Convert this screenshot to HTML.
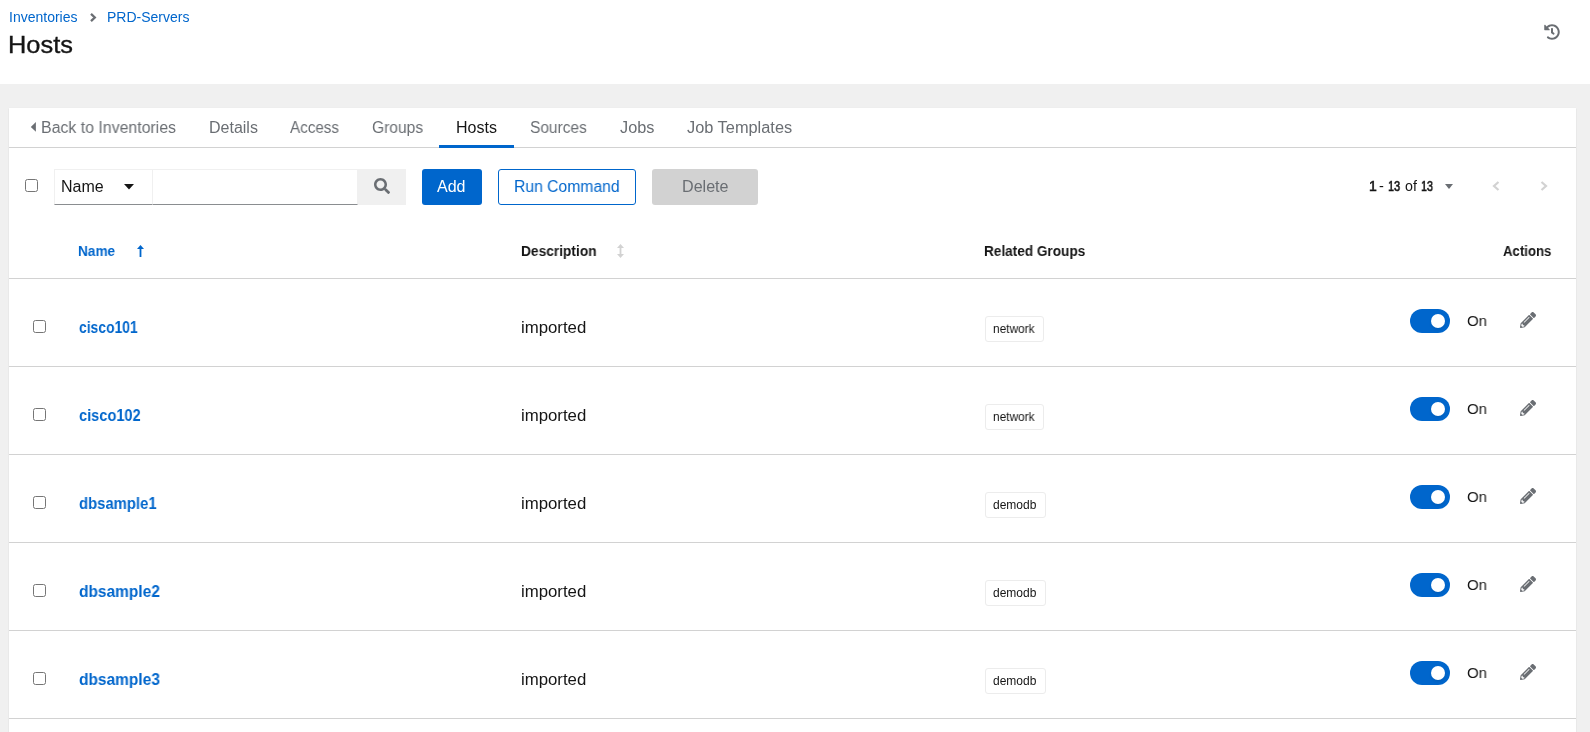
<!DOCTYPE html>
<html><head><meta charset="utf-8"><title>Hosts</title>
<style>
html,body{margin:0;padding:0;}
body{width:1590px;height:732px;overflow:hidden;position:relative;background:#f0f0f0;font-family:"Liberation Sans", sans-serif;}
.hdr{position:absolute;left:0;top:0;width:1590px;height:84px;background:#fff;}
.card{position:absolute;left:9px;top:108px;width:1567px;height:700px;background:#fff;box-shadow:0 1px 1px 0 rgba(3,3,3,.12),0 0 1px 0 rgba(3,3,3,.06);}
.t{position:absolute;white-space:nowrap;will-change:transform;}
.i{position:absolute;display:block;}
.hl{position:absolute;height:1px;background:#d2d2d2;}
.cb{position:absolute;width:13px;height:13px;box-sizing:border-box;border:1px solid #767676;border-radius:2.5px;background:#fff;}
.btn{position:absolute;top:169px;height:36px;border-radius:3px;}
.lbl{position:absolute;height:26px;box-sizing:border-box;border:1px solid #ececec;border-radius:3px;background:#fff;}
.tg{position:absolute;left:1410px;width:40px;height:24px;border-radius:12px;background:#0066cc;}
.kn{position:absolute;left:21px;top:5px;width:14px;height:14px;border-radius:7px;background:#fff;box-shadow:0 2px 3px rgba(3,3,3,.08);}
</style></head><body>
<div class="hdr"></div>
<div class="t" style="left:9px;top:10.15px;font-size:14px;line-height:14px;color:#0066cc;font-weight:400;">Inventories</div>
<svg class="i" style="left:89px;top:12px" width="9" height="11" viewBox="0 0 9 11"><path d="M2 1.9 L5.8 5.5 L2 9.1" fill="none" stroke="#6a6e73" stroke-width="2.3"/></svg>
<div class="t" style="left:107px;top:10.15px;font-size:14px;line-height:14px;color:#0066cc;font-weight:400;">PRD-Servers</div>
<div class="t" style="left:8px;top:33.48px;font-size:24px;line-height:24px;color:#151515;font-weight:400;transform:scaleX(1.0574);transform-origin:0 0;-webkit-text-stroke:0.35px #151515;">Hosts</div>
<svg class="i" style="left:1544px;top:24px" width="16" height="16" viewBox="0 0 512 512"><path fill="#6a6e73" d="M504 255.531c.253 136.64-111.18 248.372-247.82 248.468-59.015.042-113.223-20.53-155.822-54.911-11.077-8.94-11.905-25.541-1.839-35.607l11.267-11.267c8.609-8.609 22.353-9.551 31.891-1.984C173.062 425.135 212.781 440 256 440c101.705 0 184-82.311 184-184 0-101.705-82.311-184-184-184-48.814 0-93.149 18.969-126.068 49.932l50.754 50.754c10.08 10.08 2.941 27.314-11.313 27.314H24c-8.837 0-16-7.163-16-16V38.627c0-14.254 17.234-21.393 27.314-11.314l49.372 49.372C129.209 34.136 189.552 8 256 8c136.81 0 247.747 110.78 248 247.531zm-180.912 78.784l9.823-12.63c8.138-10.463 6.253-25.542-4.21-33.679L288 256.349V152c0-13.255-10.745-24-24-24h-16c-13.255 0-24 10.745-24 24v135.651l65.409 50.874c10.463 8.137 25.541 6.253 33.679-4.21z"/></svg>
<div class="card"></div>
<div class="hl" style="left:9px;top:147px;width:1567px"></div>
<svg class="i" style="left:30px;top:122px" width="7" height="10" viewBox="0 0 7 10"><path d="M5.9 0 L0.8 4.9 L5.9 9.8 Z" fill="#6a6e73"/></svg>
<div class="t" style="left:41px;top:120.46px;font-size:16px;line-height:16px;color:#6a6e73;font-weight:400;transform:scaleX(0.9926);transform-origin:0 0;">Back to Inventories</div>
<div class="t" style="left:209px;top:120.46px;font-size:16px;line-height:16px;color:#6a6e73;font-weight:400;transform:scaleX(0.9918);transform-origin:0 0;">Details</div>
<div class="t" style="left:290px;top:120.46px;font-size:16px;line-height:16px;color:#6a6e73;font-weight:400;transform:scaleX(0.9500);transform-origin:0 0;">Access</div>
<div class="t" style="left:372px;top:120.46px;font-size:16px;line-height:16px;color:#6a6e73;font-weight:400;transform:scaleX(0.9736);transform-origin:0 0;">Groups</div>
<div class="t" style="left:456px;top:120.46px;font-size:16px;line-height:16px;color:#151515;font-weight:400;transform:scaleX(0.9927);transform-origin:0 0;">Hosts</div>
<div class="t" style="left:530px;top:120.46px;font-size:16px;line-height:16px;color:#6a6e73;font-weight:400;transform:scaleX(0.9678);transform-origin:0 0;">Sources</div>
<div class="t" style="left:619.5px;top:120.46px;font-size:16px;line-height:16px;color:#6a6e73;font-weight:400;transform:scaleX(1.0176);transform-origin:0 0;">Jobs</div>
<div class="t" style="left:687px;top:120.46px;font-size:16px;line-height:16px;color:#6a6e73;font-weight:400;transform:scaleX(1.0223);transform-origin:0 0;">Job Templates</div>
<div style="position:absolute;left:439px;top:145px;width:75px;height:3px;background:#0066cc"></div>
<div class="cb" style="left:25px;top:179px"></div>
<div style="position:absolute;left:54px;top:169px;width:99px;height:35px;border:1px solid #f0f0f0;border-bottom-color:#8a8d90;box-sizing:border-box;height:36px"></div>
<div class="t" style="left:61px;top:179.46px;font-size:16px;line-height:16px;color:#151515;font-weight:400;">Name</div>
<svg class="i" style="left:124px;top:184px" width="10" height="6" viewBox="0 0 10 6"><path d="M0 0 H10 L5 5.5 Z" fill="#151515"/></svg>
<div style="position:absolute;left:153px;top:169px;width:205px;height:36px;border:1px solid #f0f0f0;border-left:none;border-bottom-color:#8a8d90;box-sizing:border-box"></div>
<div style="position:absolute;left:358px;top:169px;width:48px;height:36px;background:#f0f0f0"></div>
<svg class="i" style="left:374px;top:178px" width="16" height="16" viewBox="0 0 512 512"><path fill="#6a6e73" d="M505 442.7L405.3 343c-4.5-4.5-10.6-7-17-7H372c27.6-35.3 44-79.7 44-128C416 93.1 322.9 0 208 0S0 93.1 0 208s93.1 208 208 208c48.3 0 92.7-16.4 128-44v16.3c0 6.4 2.5 12.5 7 17l99.7 99.7c9.4 9.4 24.6 9.4 33.9 0l28.3-28.3c9.4-9.4 9.4-24.6.1-34zM208 336c-70.7 0-128-57.2-128-128 0-70.7 57.2-128 128-128 70.7 0 128 57.2 128 128 0 70.7-57.2 128-128 128z"/></svg>
<div class="btn" style="left:422px;width:60px;background:#0066cc"></div>
<div class="t" style="left:437px;top:179.46px;font-size:16px;line-height:16px;color:#ffffff;font-weight:400;">Add</div>
<div class="btn" style="left:498px;width:138px;border:1px solid #0066cc;box-sizing:border-box"></div>
<div class="t" style="left:514px;top:179.46px;font-size:16px;line-height:16px;color:#0066cc;font-weight:400;transform:scaleX(0.9815);transform-origin:0 0;">Run Command</div>
<div class="btn" style="left:652px;width:106px;background:#d2d2d2"></div>
<div class="t" style="left:681.5px;top:179.46px;font-size:16px;line-height:16px;color:#6a6e73;font-weight:400;transform:scaleX(1.0065);transform-origin:0 0;">Delete</div>
<div class="t" style="left:1368.5px;top:179.15px;font-size:14px;line-height:14px;color:#151515;font-weight:400;-webkit-text-stroke:0.55px #151515;">1</div>
<div class="t" style="left:1378.5px;top:179.15px;font-size:14px;line-height:14px;color:#151515;font-weight:400;transform:scaleX(1.0400);transform-origin:0 0;">-</div>
<div class="t" style="left:1387.5px;top:179.15px;font-size:14px;line-height:14px;color:#151515;font-weight:400;transform:scaleX(0.7812);transform-origin:0 0;-webkit-text-stroke:0.55px #151515;">13</div>
<div class="t" style="left:1404.5px;top:179.15px;font-size:14px;line-height:14px;color:#151515;font-weight:400;transform:scaleX(1.0167);transform-origin:0 0;">of</div>
<div class="t" style="left:1420.5px;top:179.15px;font-size:14px;line-height:14px;color:#151515;font-weight:400;transform:scaleX(0.7688);transform-origin:0 0;-webkit-text-stroke:0.55px #151515;">13</div>
<svg class="i" style="left:1445px;top:184px" width="8" height="5" viewBox="0 0 8 5"><path d="M0 0 H8 L4 5 Z" fill="#6a6e73"/></svg>
<svg class="i" style="left:1492px;top:181px" width="8" height="10" viewBox="0 0 8 10"><path d="M6.5 1 L2 5 L6.5 9" fill="none" stroke="#d2d2d2" stroke-width="2.2"/></svg>
<svg class="i" style="left:1540px;top:181px" width="8" height="10" viewBox="0 0 8 10"><path d="M1.5 1 L6 5 L1.5 9" fill="none" stroke="#d2d2d2" stroke-width="2.2"/></svg>
<div class="t" style="left:78px;top:244.15px;font-size:14px;line-height:14px;color:#0066cc;font-weight:700;transform:scaleX(0.9737);transform-origin:0 0;">Name</div>
<svg class="i" style="left:136.5px;top:245px" width="7" height="12" viewBox="0 0 7 12"><path d="M3.5 0 L7 4 H4.4 V12 H2.6 V4 H0 Z" fill="#0066cc"/></svg>
<div class="t" style="left:521px;top:244.15px;font-size:14px;line-height:14px;color:#151515;font-weight:700;transform:scaleX(0.9805);transform-origin:0 0;">Description</div>
<svg class="i" style="left:617px;top:244px" width="7" height="14" viewBox="0 0 7 14"><path d="M3.5 0 L7 4 H4.4 V10 H7 L3.5 14 L0 10 H2.6 V4 H0 Z" fill="#d2d2d2"/></svg>
<div class="t" style="left:984px;top:244.15px;font-size:14px;line-height:14px;color:#151515;font-weight:700;transform:scaleX(0.9712);transform-origin:0 0;">Related Groups</div>
<div class="t" style="left:1503px;top:244.15px;font-size:14px;line-height:14px;color:#151515;font-weight:700;transform:scaleX(0.9423);transform-origin:0 0;">Actions</div>
<div class="hl" style="left:9px;top:278px;width:1567px"></div>
<div class="cb" style="left:33px;top:320px"></div>
<div class="t" style="left:78.5px;top:319.86px;font-size:16px;line-height:16px;color:#0066cc;font-weight:700;transform:scaleX(0.8676);transform-origin:0 0;">cisco101</div>
<div class="t" style="left:521px;top:320.46px;font-size:16px;line-height:16px;color:#151515;font-weight:400;transform:scaleX(1.0484);transform-origin:0 0;">imported</div>
<div class="lbl" style="left:985px;top:316px;width:59px"></div>
<div class="t" style="left:993px;top:322.84px;font-size:12px;line-height:12px;color:#151515;font-weight:400;transform:scaleX(0.9884);transform-origin:0 0;">network</div>
<div class="tg" style="top:309px"><div class="kn"></div></div>
<div class="t" style="left:1467px;top:312.88px;font-size:15.5px;line-height:15.5px;color:#151515;font-weight:400;transform:scaleX(0.9667);transform-origin:0 0;">On</div>
<svg class="i" style="left:1520px;top:312px" width="16" height="16" viewBox="0 0 512 512"><path fill="#6a6e73" d="M497.9 142.1l-46.1 46.1c-4.7 4.7-12.3 4.7-17 0l-111-111c-4.7-4.7-4.7-12.3 0-17l46.1-46.1c18.7-18.7 49.1-18.7 67.9 0l60.1 60.1c18.8 18.7 18.8 49.1 0 67.9zM284.2 99.8L21.6 362.4.4 483.9c-2.9 16.4 11.4 30.6 27.8 27.8l121.5-21.3 262.6-262.6c4.7-4.7 4.7-12.3 0-17l-111-111c-4.8-4.7-12.4-4.7-17.1 0zM124.1 339.9c-5.5-5.5-5.5-14.3 0-19.8l154-154c5.5-5.5 14.3-5.5 19.8 0s5.5 14.3 0 19.8l-154 154c-5.5 5.5-14.3 5.5-19.8 0zM88 424h48v36.3l-64.5 11.3-31.1-31.1L51.7 376H88v48z"/></svg>
<div class="hl" style="left:9px;top:366px;width:1567px"></div>
<div class="cb" style="left:33px;top:408px"></div>
<div class="t" style="left:78.5px;top:407.86px;font-size:16px;line-height:16px;color:#0066cc;font-weight:700;transform:scaleX(0.9118);transform-origin:0 0;">cisco102</div>
<div class="t" style="left:521px;top:408.46px;font-size:16px;line-height:16px;color:#151515;font-weight:400;transform:scaleX(1.0484);transform-origin:0 0;">imported</div>
<div class="lbl" style="left:985px;top:404px;width:59px"></div>
<div class="t" style="left:993px;top:410.84px;font-size:12px;line-height:12px;color:#151515;font-weight:400;transform:scaleX(0.9884);transform-origin:0 0;">network</div>
<div class="tg" style="top:397px"><div class="kn"></div></div>
<div class="t" style="left:1467px;top:400.88px;font-size:15.5px;line-height:15.5px;color:#151515;font-weight:400;transform:scaleX(0.9667);transform-origin:0 0;">On</div>
<svg class="i" style="left:1520px;top:400px" width="16" height="16" viewBox="0 0 512 512"><path fill="#6a6e73" d="M497.9 142.1l-46.1 46.1c-4.7 4.7-12.3 4.7-17 0l-111-111c-4.7-4.7-4.7-12.3 0-17l46.1-46.1c18.7-18.7 49.1-18.7 67.9 0l60.1 60.1c18.8 18.7 18.8 49.1 0 67.9zM284.2 99.8L21.6 362.4.4 483.9c-2.9 16.4 11.4 30.6 27.8 27.8l121.5-21.3 262.6-262.6c4.7-4.7 4.7-12.3 0-17l-111-111c-4.8-4.7-12.4-4.7-17.1 0zM124.1 339.9c-5.5-5.5-5.5-14.3 0-19.8l154-154c5.5-5.5 14.3-5.5 19.8 0s5.5 14.3 0 19.8l-154 154c-5.5 5.5-14.3 5.5-19.8 0zM88 424h48v36.3l-64.5 11.3-31.1-31.1L51.7 376H88v48z"/></svg>
<div class="hl" style="left:9px;top:454px;width:1567px"></div>
<div class="cb" style="left:33px;top:496px"></div>
<div class="t" style="left:78.5px;top:495.86px;font-size:16px;line-height:16px;color:#0066cc;font-weight:700;transform:scaleX(0.9286);transform-origin:0 0;">dbsample1</div>
<div class="t" style="left:521px;top:496.46px;font-size:16px;line-height:16px;color:#151515;font-weight:400;transform:scaleX(1.0484);transform-origin:0 0;">imported</div>
<div class="lbl" style="left:985px;top:492px;width:61px"></div>
<div class="t" style="left:993px;top:498.84px;font-size:12px;line-height:12px;color:#151515;font-weight:400;transform:scaleX(0.9932);transform-origin:0 0;">demodb</div>
<div class="tg" style="top:485px"><div class="kn"></div></div>
<div class="t" style="left:1467px;top:488.88px;font-size:15.5px;line-height:15.5px;color:#151515;font-weight:400;transform:scaleX(0.9667);transform-origin:0 0;">On</div>
<svg class="i" style="left:1520px;top:488px" width="16" height="16" viewBox="0 0 512 512"><path fill="#6a6e73" d="M497.9 142.1l-46.1 46.1c-4.7 4.7-12.3 4.7-17 0l-111-111c-4.7-4.7-4.7-12.3 0-17l46.1-46.1c18.7-18.7 49.1-18.7 67.9 0l60.1 60.1c18.8 18.7 18.8 49.1 0 67.9zM284.2 99.8L21.6 362.4.4 483.9c-2.9 16.4 11.4 30.6 27.8 27.8l121.5-21.3 262.6-262.6c4.7-4.7 4.7-12.3 0-17l-111-111c-4.8-4.7-12.4-4.7-17.1 0zM124.1 339.9c-5.5-5.5-5.5-14.3 0-19.8l154-154c5.5-5.5 14.3-5.5 19.8 0s5.5 14.3 0 19.8l-154 154c-5.5 5.5-14.3 5.5-19.8 0zM88 424h48v36.3l-64.5 11.3-31.1-31.1L51.7 376H88v48z"/></svg>
<div class="hl" style="left:9px;top:542px;width:1567px"></div>
<div class="cb" style="left:33px;top:584px"></div>
<div class="t" style="left:78.5px;top:583.86px;font-size:16px;line-height:16px;color:#0066cc;font-weight:700;transform:scaleX(0.9679);transform-origin:0 0;">dbsample2</div>
<div class="t" style="left:521px;top:584.46px;font-size:16px;line-height:16px;color:#151515;font-weight:400;transform:scaleX(1.0484);transform-origin:0 0;">imported</div>
<div class="lbl" style="left:985px;top:580px;width:61px"></div>
<div class="t" style="left:993px;top:586.84px;font-size:12px;line-height:12px;color:#151515;font-weight:400;transform:scaleX(0.9932);transform-origin:0 0;">demodb</div>
<div class="tg" style="top:573px"><div class="kn"></div></div>
<div class="t" style="left:1467px;top:576.88px;font-size:15.5px;line-height:15.5px;color:#151515;font-weight:400;transform:scaleX(0.9667);transform-origin:0 0;">On</div>
<svg class="i" style="left:1520px;top:576px" width="16" height="16" viewBox="0 0 512 512"><path fill="#6a6e73" d="M497.9 142.1l-46.1 46.1c-4.7 4.7-12.3 4.7-17 0l-111-111c-4.7-4.7-4.7-12.3 0-17l46.1-46.1c18.7-18.7 49.1-18.7 67.9 0l60.1 60.1c18.8 18.7 18.8 49.1 0 67.9zM284.2 99.8L21.6 362.4.4 483.9c-2.9 16.4 11.4 30.6 27.8 27.8l121.5-21.3 262.6-262.6c4.7-4.7 4.7-12.3 0-17l-111-111c-4.8-4.7-12.4-4.7-17.1 0zM124.1 339.9c-5.5-5.5-5.5-14.3 0-19.8l154-154c5.5-5.5 14.3-5.5 19.8 0s5.5 14.3 0 19.8l-154 154c-5.5 5.5-14.3 5.5-19.8 0zM88 424h48v36.3l-64.5 11.3-31.1-31.1L51.7 376H88v48z"/></svg>
<div class="hl" style="left:9px;top:630px;width:1567px"></div>
<div class="cb" style="left:33px;top:672px"></div>
<div class="t" style="left:78.5px;top:671.86px;font-size:16px;line-height:16px;color:#0066cc;font-weight:700;transform:scaleX(0.9679);transform-origin:0 0;">dbsample3</div>
<div class="t" style="left:521px;top:672.46px;font-size:16px;line-height:16px;color:#151515;font-weight:400;transform:scaleX(1.0484);transform-origin:0 0;">imported</div>
<div class="lbl" style="left:985px;top:668px;width:61px"></div>
<div class="t" style="left:993px;top:674.84px;font-size:12px;line-height:12px;color:#151515;font-weight:400;transform:scaleX(0.9932);transform-origin:0 0;">demodb</div>
<div class="tg" style="top:661px"><div class="kn"></div></div>
<div class="t" style="left:1467px;top:664.88px;font-size:15.5px;line-height:15.5px;color:#151515;font-weight:400;transform:scaleX(0.9667);transform-origin:0 0;">On</div>
<svg class="i" style="left:1520px;top:664px" width="16" height="16" viewBox="0 0 512 512"><path fill="#6a6e73" d="M497.9 142.1l-46.1 46.1c-4.7 4.7-12.3 4.7-17 0l-111-111c-4.7-4.7-4.7-12.3 0-17l46.1-46.1c18.7-18.7 49.1-18.7 67.9 0l60.1 60.1c18.8 18.7 18.8 49.1 0 67.9zM284.2 99.8L21.6 362.4.4 483.9c-2.9 16.4 11.4 30.6 27.8 27.8l121.5-21.3 262.6-262.6c4.7-4.7 4.7-12.3 0-17l-111-111c-4.8-4.7-12.4-4.7-17.1 0zM124.1 339.9c-5.5-5.5-5.5-14.3 0-19.8l154-154c5.5-5.5 14.3-5.5 19.8 0s5.5 14.3 0 19.8l-154 154c-5.5 5.5-14.3 5.5-19.8 0zM88 424h48v36.3l-64.5 11.3-31.1-31.1L51.7 376H88v48z"/></svg>
<div class="hl" style="left:9px;top:718px;width:1567px"></div>
</body></html>
